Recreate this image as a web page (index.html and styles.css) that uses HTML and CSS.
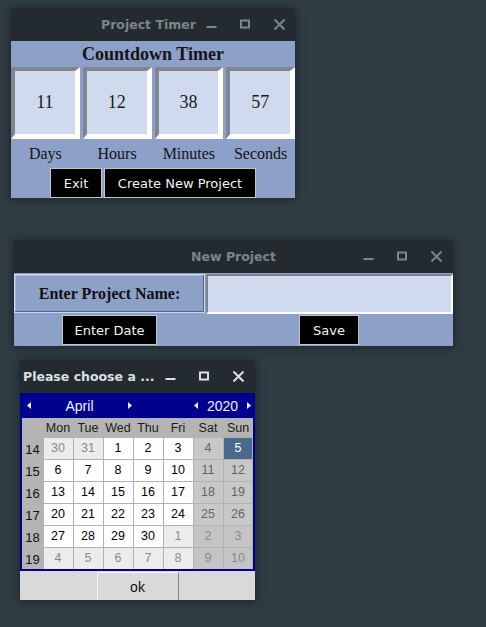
FILE: index.html
```html
<!DOCTYPE html>
<html>
<head>
<meta charset="utf-8">
<link rel="stylesheet" href="styles.css">
</head>
<body>
<div class="desktop">

  <div class="win w1">
    <div class="titlebar">
      <div class="title title-shift">Project Timer</div>
      <div class="ctrls">
        <svg class="ic" viewBox="0 0 11 11"><rect x="0.5" y="7" width="10" height="2" fill="currentColor"/></svg>
        <svg class="ic" viewBox="0 0 11 11"><rect x="1" y="1.5" width="8" height="7" fill="none" stroke="currentColor" stroke-width="2"/></svg>
        <svg class="ic" viewBox="0 0 11 11"><path d="M0.5 0.5L10.5 10.5M10.5 0.5L0.5 10.5" stroke="currentColor" stroke-width="2" fill="none"/></svg>
      </div>
    </div>
    <div class="timer">
      <div class="heading">Countdown Timer</div>
      <div class="boxes">
        <div class="box">11</div>
        <div class="box">12</div>
        <div class="box">38</div>
        <div class="box">57</div>
      </div>
      <div class="units">
        <div>Days</div>
        <div>Hours</div>
        <div>Minutes</div>
        <div>Seconds</div>
      </div>
      <div class="actions">
        <button class="btn b-exit">Exit</button>
        <button class="btn b-create">Create New Project</button>
      </div>
    </div>
  </div>

  <div class="win w2">
    <div class="titlebar">
      <div class="title">New Project</div>
      <div class="ctrls">
        <svg class="ic" viewBox="0 0 11 11"><rect x="0.5" y="7" width="10" height="2" fill="currentColor"/></svg>
        <svg class="ic" viewBox="0 0 11 11"><rect x="1" y="1.5" width="8" height="7" fill="none" stroke="currentColor" stroke-width="2"/></svg>
        <svg class="ic" viewBox="0 0 11 11"><path d="M0.5 0.5L10.5 10.5M10.5 0.5L0.5 10.5" stroke="currentColor" stroke-width="2" fill="none"/></svg>
      </div>
    </div>
    <div class="form">
      <div class="name-label">Enter Project Name:</div>
      <div class="entry"></div>
      <div class="cell-center"><button class="btn b-date">Enter Date</button></div>
      <div class="cell-center"><button class="btn b-save">Save</button></div>
    </div>
  </div>

  <div class="win w3">
    <div class="titlebar active">
      <div class="title title-left">Please choose a ...</div>
      <div class="ctrls">
        <svg class="ic" viewBox="0 0 11 11"><rect x="0.5" y="7" width="10" height="2" fill="currentColor"/></svg>
        <svg class="ic" viewBox="0 0 11 11"><rect x="1" y="1.5" width="8" height="7" fill="none" stroke="currentColor" stroke-width="2"/></svg>
        <svg class="ic" viewBox="0 0 11 11"><path d="M0.5 0.5L10.5 10.5M10.5 0.5L0.5 10.5" stroke="currentColor" stroke-width="2" fill="none"/></svg>
      </div>
    </div>
    <div class="cal">
      <div class="cal-head">
        <div class="nav nav-month">
          <svg class="arr" viewBox="0 0 4 7"><polygon points="4,0 4,7 0,3.5" fill="currentColor"/></svg>
          <span class="nav-label month">April</span>
          <svg class="arr" viewBox="0 0 4 7"><polygon points="0,0 0,7 4,3.5" fill="currentColor"/></svg>
        </div>
        <div class="nav nav-year">
          <svg class="arr" viewBox="0 0 4 7"><polygon points="4,0 4,7 0,3.5" fill="currentColor"/></svg>
          <span class="nav-label year">2020</span>
          <svg class="arr" viewBox="0 0 4 7"><polygon points="0,0 0,7 4,3.5" fill="currentColor"/></svg>
        </div>
      </div>
      <div class="cal-grid">
        <div class="dh"></div><div class="dh">Mon</div><div class="dh">Tue</div><div class="dh">Wed</div><div class="dh">Thu</div><div class="dh">Fri</div><div class="dh">Sat</div><div class="dh">Sun</div>

        <div class="wk">14</div><div class="d om">30</div><div class="d om">31</div><div class="d">1</div><div class="d">2</div><div class="d">3</div><div class="d we">4</div><div class="d sel last">5</div>
        <div class="wk">15</div><div class="d">6</div><div class="d">7</div><div class="d">8</div><div class="d">9</div><div class="d">10</div><div class="d we">11</div><div class="d we last">12</div>
        <div class="wk">16</div><div class="d">13</div><div class="d">14</div><div class="d">15</div><div class="d">16</div><div class="d">17</div><div class="d we">18</div><div class="d we last">19</div>
        <div class="wk">17</div><div class="d">20</div><div class="d">21</div><div class="d">22</div><div class="d">23</div><div class="d">24</div><div class="d we">25</div><div class="d we last">26</div>
        <div class="wk">18</div><div class="d">27</div><div class="d">28</div><div class="d">29</div><div class="d">30</div><div class="d om">1</div><div class="d weom">2</div><div class="d weom last">3</div>
        <div class="wk">19</div><div class="d om">4</div><div class="d om">5</div><div class="d om">6</div><div class="d om">7</div><div class="d om">8</div><div class="d weom">9</div><div class="d weom last">10</div>
      </div>
    </div>
    <div class="cal-foot">
      <button class="ok">ok</button>
    </div>
  </div>

</div>
</body>
</html>
```

FILE: styles.css
```css
body {
  margin: 0;
  background: #2f3c43;
}

.desktop {
  position: relative;
  width: 486px;
  height: 627px;
  overflow: hidden;
}

.win {
  position: absolute;
  box-shadow: 0 1px 9px rgba(0, 0, 0, 0.45);
}

.w1 { left: 11px; top: 8px; width: 284px; }
.w2 { left: 14px; top: 240px; width: 439px; }
.w3 { left: 20px; top: 360px; width: 235px; }

.titlebar {
  height: 33px;
  background: #232b30;
  display: grid;
  grid-template-columns: 90px 1fr 90px;
  align-items: center;
  color: #7b858a;
  font: bold 12.5px "DejaVu Sans", sans-serif;
}

.titlebar.active { color: #dce0e2; }

.title {
  grid-column: 2;
  justify-self: center;
  white-space: nowrap;
}

.title-shift {
  justify-self: end;
  margin-right: 10px;
}

.title-left {
  grid-column: 1 / 3;
  justify-self: start;
  padding-left: 3px;
}

.ctrls {
  grid-column: 3;
  display: flex;
  gap: 23px;
  align-items: center;
}

.ic {
  width: 11px;
  height: 11px;
  display: block;
}

/* ---------- countdown window ---------- */
.timer {
  background: #8da0c8;
  font-family: "Liberation Serif", serif;
  color: #141414;
}

.heading {
  height: 26px;
  line-height: 26px;
  text-align: center;
  font-weight: bold;
  font-size: 18px;
}

.boxes {
  display: grid;
  grid-template-columns: repeat(4, 1fr);
  gap: 3px;
}

.box {
  box-sizing: border-box;
  height: 72px;
  border-style: solid;
  border-width: 4px 5px 5px 4px;
  border-color: #80858f #ffffff #ffffff #80858f;
  background: #d0daee;
  display: flex;
  align-items: center;
  justify-content: center;
  font-size: 18px;
  color: #1a1a1a;
}

.units {
  display: grid;
  grid-template-columns: repeat(4, 1fr);
  gap: 3px;
  height: 29px;
  line-height: 29px;
  text-align: center;
  font-size: 16px;
}

.actions {
  height: 30px;
  display: flex;
  justify-content: center;
  gap: 2px;
}

.btn {
  box-sizing: border-box;
  height: 30px;
  margin: 0;
  padding: 0;
  background: #000;
  color: #f2f2f2;
  border: 1px solid #c4c4c4;
  font: 13px "DejaVu Sans", sans-serif;
  text-align: center;
}

.b-exit { width: 52px; }
.b-create { width: 152px; }
.b-date { width: 95px; }
.b-save { width: 60px; }

/* ---------- new project window ---------- */
.form {
  background: #8da0c8;
  display: grid;
  grid-template-columns: 191px 1fr;
  padding-top: 1px;
}

.name-label {
  box-sizing: border-box;
  height: 39px;
  border: 1px solid #cbd7ef;
  box-shadow: inset -1px -1px 0 #56647f, inset 1px 1px 0 #a9b8d8;
  display: flex;
  align-items: center;
  justify-content: center;
  font: bold 16px "Liberation Serif", serif;
  color: #111;
}

.entry {
  box-sizing: border-box;
  height: 40px;
  margin-left: 1px;
  background: #d0daee;
  border-style: solid;
  border-width: 2px;
  border-color: #7f8288 #ffffff #ffffff #7f8288;
}

.cell-center {
  height: 32px;
  display: flex;
  justify-content: center;
  align-items: center;
}

/* ---------- calendar window ---------- */
.cal {
  background: #00008f;
  padding: 0 2px 2px 2px;
  font-family: "Liberation Sans", sans-serif;
}

.cal-head {
  height: 25px;
  display: flex;
  justify-content: space-between;
  align-items: center;
  color: #f0f0ff;
  font-size: 14px;
}

.nav {
  display: flex;
  align-items: center;
}

.nav-month { padding-left: 5px; }
.nav-year { padding-right: 2px; }

.arr {
  width: 4px;
  height: 7px;
  display: block;
}

.nav-label { text-align: center; }
.month { width: 97px; }
.year { width: 49px; }

.cal-grid {
  display: grid;
  grid-template-columns: 21px repeat(7, 30px);
  grid-template-rows: 19px repeat(6, 22px);
  background: #b4b4b4;
  font-size: 12.5px;
}

.dh {
  display: flex;
  align-items: center;
  justify-content: center;
  color: #1a1a1a;
}

.wk {
  display: flex;
  align-items: center;
  justify-content: center;
  padding-top: 2px;
  font-size: 13px;
  color: #111;
}

.d {
  display: flex;
  align-items: center;
  justify-content: center;
  background: #ffffff;
  color: #000;
  box-shadow: inset 1px 1px 0 #b2b2b2;
}

.d.last {
  box-shadow: inset 1px 1px 0 #b2b2b2, inset -1px 0 0 #b2b2b2;
}

.d.om {
  background: #ececec;
  color: #8a8a8a;
}

.d.we {
  background: #c8c8c8;
  color: #646464;
}

.d.weom {
  background: #c4c4c4;
  color: #8a8a8a;
}

.d.sel {
  background: #4a6a8b;
  color: #ffffff;
}

.cal-foot {
  height: 29px;
  background: #d9d9d9;
  display: flex;
  justify-content: center;
  align-items: flex-end;
}

.ok {
  box-sizing: border-box;
  width: 82px;
  height: 28px;
  margin: 0;
  padding: 0;
  background: #d9d9d9;
  border-style: solid;
  border-width: 1px 1px 0 1px;
  border-color: #f4f4f4 #8a8a8a #8a8a8a #f4f4f4;
  font: 14px "Liberation Sans", sans-serif;
  color: #111;
}
```
